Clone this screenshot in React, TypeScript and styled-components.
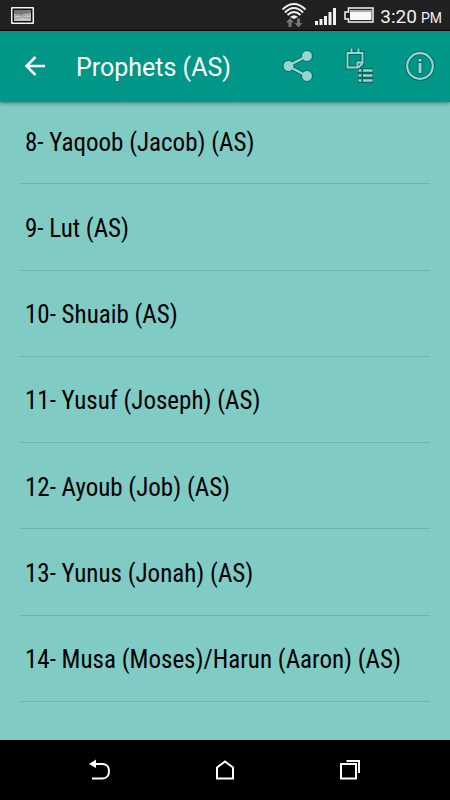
import React from 'react';
import styled, { createGlobalStyle } from 'styled-components';

const GlobalStyle = createGlobalStyle`
  *, *::before, *::after { box-sizing: border-box; }
  body { margin: 0; background: #80cbc4; }
`;

const Screen = styled.div`
  display: flex;
  flex-direction: column;
  min-height: 100vh;
  background: #80cbc4;
  font-family: Roboto, sans-serif;
`;

const StatusBar = styled.div`
  display: flex;
  align-items: center;
  justify-content: space-between;
  height: 31px;
  padding: 0 8px 0 10px;
  background: #212121;
  border-bottom: 1px solid #1a0508;
  color: #f0f0f0;
`;

const StatusIcons = styled.div`
  display: flex;
  align-items: center;
`;

const SignalSlot = styled.span`
  display: flex;
  margin: 4px 6px 0 7px;
`;

const Clock = styled.time`
  margin-left: 5px;
  padding-top: 4px;
  font-size: 19px;
  line-height: 24px;
  white-space: nowrap;
`;

const Meridiem = styled.span`
  margin-left: 4px;
  font-size: 14px;
`;

const Toolbar = styled.header`
  position: relative;
  display: flex;
  align-items: center;
  height: 71px;
  padding: 0 14px 1px 20px;
  background: #009688;
  box-shadow: 0 1px 4px rgba(0, 0, 0, 0.45);
`;

const Title = styled.h1`
  flex: 1;
  margin: 3px 0 0 26px;
  color: #fff;
  font-size: 25px;
  line-height: 32px;
  font-weight: 400;
  white-space: nowrap;
`;

const Actions = styled.div`
  display: flex;
  align-items: center;
  gap: 30px;
`;

const IconButton = styled.button`
  display: block;
  padding: 0;
  border: 0;
  background: none;
  color: inherit;
  cursor: pointer;

  svg { display: block; }
`;

const Content = styled.main`
  display: flex;
  flex: 1;
  flex-direction: column;
  padding: 0 20px 38px;
`;

const List = styled.ul`
  display: flex;
  flex: 1;
  flex-direction: column;
  margin: -4px 0 0;
  padding: 0;
  list-style: none;
`;

const Row = styled.li`
  display: flex;
  flex: 1;
  border-bottom: 1px solid #70b3ad;
`;

const RowLink = styled.a`
  display: flex;
  flex: 1;
  align-items: center;
  padding: 28px 5px 24px;
  color: #000;
  font-family: 'Roboto Condensed', Roboto, sans-serif;
  font-size: 25px;
  line-height: 32px;
  text-decoration: none;
`;

const NavBar = styled.nav`
  display: flex;
  align-items: center;
  justify-content: center;
  gap: 93px;
  height: 60px;
  background: #000;
`;

const prophets = [
  '8- Yaqoob (Jacob) (AS)',
  '9- Lut (AS)',
  '10- Shuaib (AS)',
  '11- Yusuf (Joseph) (AS)',
  '12- Ayoub (Job) (AS)',
  '13- Yunus (Jonah) (AS)',
  '14- Musa (Moses)/Harun (Aaron) (AS)',
];

const TINT = '#99d5cf';
const EDGE = '#04695f';

const PictureIcon = () => (
  <svg width="25" height="20" viewBox="0 0 25 20" aria-hidden="true">
    <rect x="1" y="2" width="23" height="17" rx="1" fill="#f4f4f4" />
    <rect x="2.5" y="3.5" width="20" height="14" fill="#111" />
    <rect x="4" y="5" width="17" height="11" fill="#c4c4c4" />
    <path d="M4 5h17v3l-6 1-4 1-7-1z" fill="#777" />
    <path d="M4 11l5-1 4 1 8-2M4 14l8-2 9 1" stroke="#999" fill="none" />
  </svg>
);

const WifiIcon = () => (
  <svg width="28" height="28" viewBox="0 0 28 28" aria-hidden="true">
    <g fill="none" stroke="#f2f2f2" strokeWidth="2">
      <path d="M2.5 8.5Q14-2.5 25.5 8.5" />
      <path d="M5 11.5Q14 2.500 23 11.5" />
      <path d="M7.500 14Q14 8 20.500 14" />
    </g>
    <path d="M10 16Q14 12.500 18 16L14 18z" fill="#f2f2f2" />
    <path d="M10 17l4 4.500h-2.500V26h-3v-4.500H6zM18.500 26.500l-4-4.500H17v-4.500h3V22h2.500z" fill="#777" />
  </svg>
);

const SignalIcon = () => (
  <svg width="22" height="18" viewBox="0 0 22 18" fill="#f2f2f2" aria-hidden="true">
    <path d="M0 13h3v4H0zM4.500 11h3v6h-3zM9 8h3v9H9zM13.500 4h3v13h-3zM18 0h3v17h-3z" />
  </svg>
);

const BatteryIcon = () => (
  <svg width="32" height="16" viewBox="0 0 32 16" aria-hidden="true">
    <path d="M5.500 1H30v14H5.500v-3H2V5h3.500z" fill="#212121" stroke="#f2f2f2" strokeWidth="1.5" />
    <path d="M7 3H28.500v10H7z" fill="#f8f8f8" />
    <path d="M7 3H28.500v2H7z" fill="#aaa" />
  </svg>
);

const BackArrow = () => (
  <svg width="30" height="30" viewBox="0 0 30 30" aria-hidden="true">
    <path d="M25 15H7M15.500 6L6.500 15l9 9" fill="none" stroke="#fff" strokeWidth="2.5" />
  </svg>
);

const ShareIcon = () => (
  <svg width="32" height="34" viewBox="0 0 32 34" aria-hidden="true">
    <path d="M25 7L6 17l19 10" fill="none" stroke={EDGE} strokeWidth="4" />
    <g fill={TINT} stroke={EDGE}>
      <circle cx="25" cy="7" r="5.5" />
      <circle cx="6.5" cy="17" r="5.5" />
      <circle cx="25" cy="27" r="5.5" />
    </g>
    <path d="M25 7L6 17l19 10" fill="none" stroke={TINT} strokeWidth="2.4" />
  </svg>
);

const noteShape = 'M3.500 6h15v10.500l-4 4h-11zM13.500 20v-4.500h5M7.500 1.500v5M14.500 1.500v5';
const NotesListIcon = () => (
  <svg width="30" height="38" viewBox="0 0 30 38" fill="none" aria-hidden="true">
    <path d={noteShape} stroke={EDGE} strokeWidth="4" />
    <path d={noteShape} stroke={TINT} strokeWidth="1.8" />
    <path d="M14 23.500h15M14 28.500h15M14 33.500h15" stroke={EDGE} strokeWidth="5" />
    <path d="M14.500 23.500h3M19 23.500h9.500M14.500 28.500h3M19 28.500h9.500M14.500 33.500h3M19 33.500h9.500" stroke={TINT} strokeWidth="2.6" />
  </svg>
);

const InfoIcon = () => (
  <svg width="32" height="32" viewBox="0 0 32 32" fill="none" aria-hidden="true">
    <circle cx="16" cy="16" r="12.8" stroke={EDGE} strokeWidth="4" />
    <circle cx="16" cy="16" r="12.8" stroke={TINT} strokeWidth="2.2" />
    <path d="M16 8v4.500M16 12.500v11.500" stroke={EDGE} strokeWidth="5" />
    <path d="M16 9v2.500M16 13v10" stroke={TINT} strokeWidth="3" />
  </svg>
);

const NavBackIcon = () => (
  <svg width="32" height="30" viewBox="0 0 32 30" aria-hidden="true">
    <path d="M11 9h7.500c4 0 6.500 3 6.500 7.200s-2.500 7.300-6.500 7.300H8" fill="none" stroke="#fff" strokeWidth="2" />
    <path d="M5 9L12 4.500v8.500z" fill="#fff" />
  </svg>
);

const NavHomeIcon = () => (
  <svg width="32" height="30" viewBox="0 0 32 30" aria-hidden="true">
    <path d="M8 12.500L16 6.500l8 6v11H8z" fill="none" stroke="#fff" strokeWidth="2" />
  </svg>
);

const NavRecentIcon = () => (
  <svg width="32" height="30" viewBox="0 0 32 30" fill="none" stroke="#fff" strokeWidth="2" aria-hidden="true">
    <path d="M7 9h15v14.500H7zM12.500 6H25v12" />
  </svg>
);

export default function App() {
  return (
    <Screen>
      <GlobalStyle />
      <StatusBar>
        <PictureIcon />
        <StatusIcons>
          <WifiIcon />
          <SignalSlot><SignalIcon /></SignalSlot>
          <BatteryIcon />
          <Clock>3:20<Meridiem>PM</Meridiem></Clock>
        </StatusIcons>
      </StatusBar>
      <Toolbar>
        <IconButton type="button" aria-label="Back"><BackArrow /></IconButton>
        <Title>Prophets (AS)</Title>
        <Actions>
          <IconButton type="button" aria-label="Share"><ShareIcon /></IconButton>
          <IconButton type="button" aria-label="Notes"><NotesListIcon /></IconButton>
          <IconButton type="button" aria-label="Information"><InfoIcon /></IconButton>
        </Actions>
      </Toolbar>
      <Content>
        <List>
          {prophets.map((name) => (
            <Row key={name}><RowLink href="#">{name}</RowLink></Row>
          ))}
        </List>
      </Content>
      <NavBar aria-label="System navigation">
        <IconButton type="button" aria-label="Go back"><NavBackIcon /></IconButton>
        <IconButton type="button" aria-label="Home"><NavHomeIcon /></IconButton>
        <IconButton type="button" aria-label="Recent apps"><NavRecentIcon /></IconButton>
      </NavBar>
    </Screen>
  );
}
